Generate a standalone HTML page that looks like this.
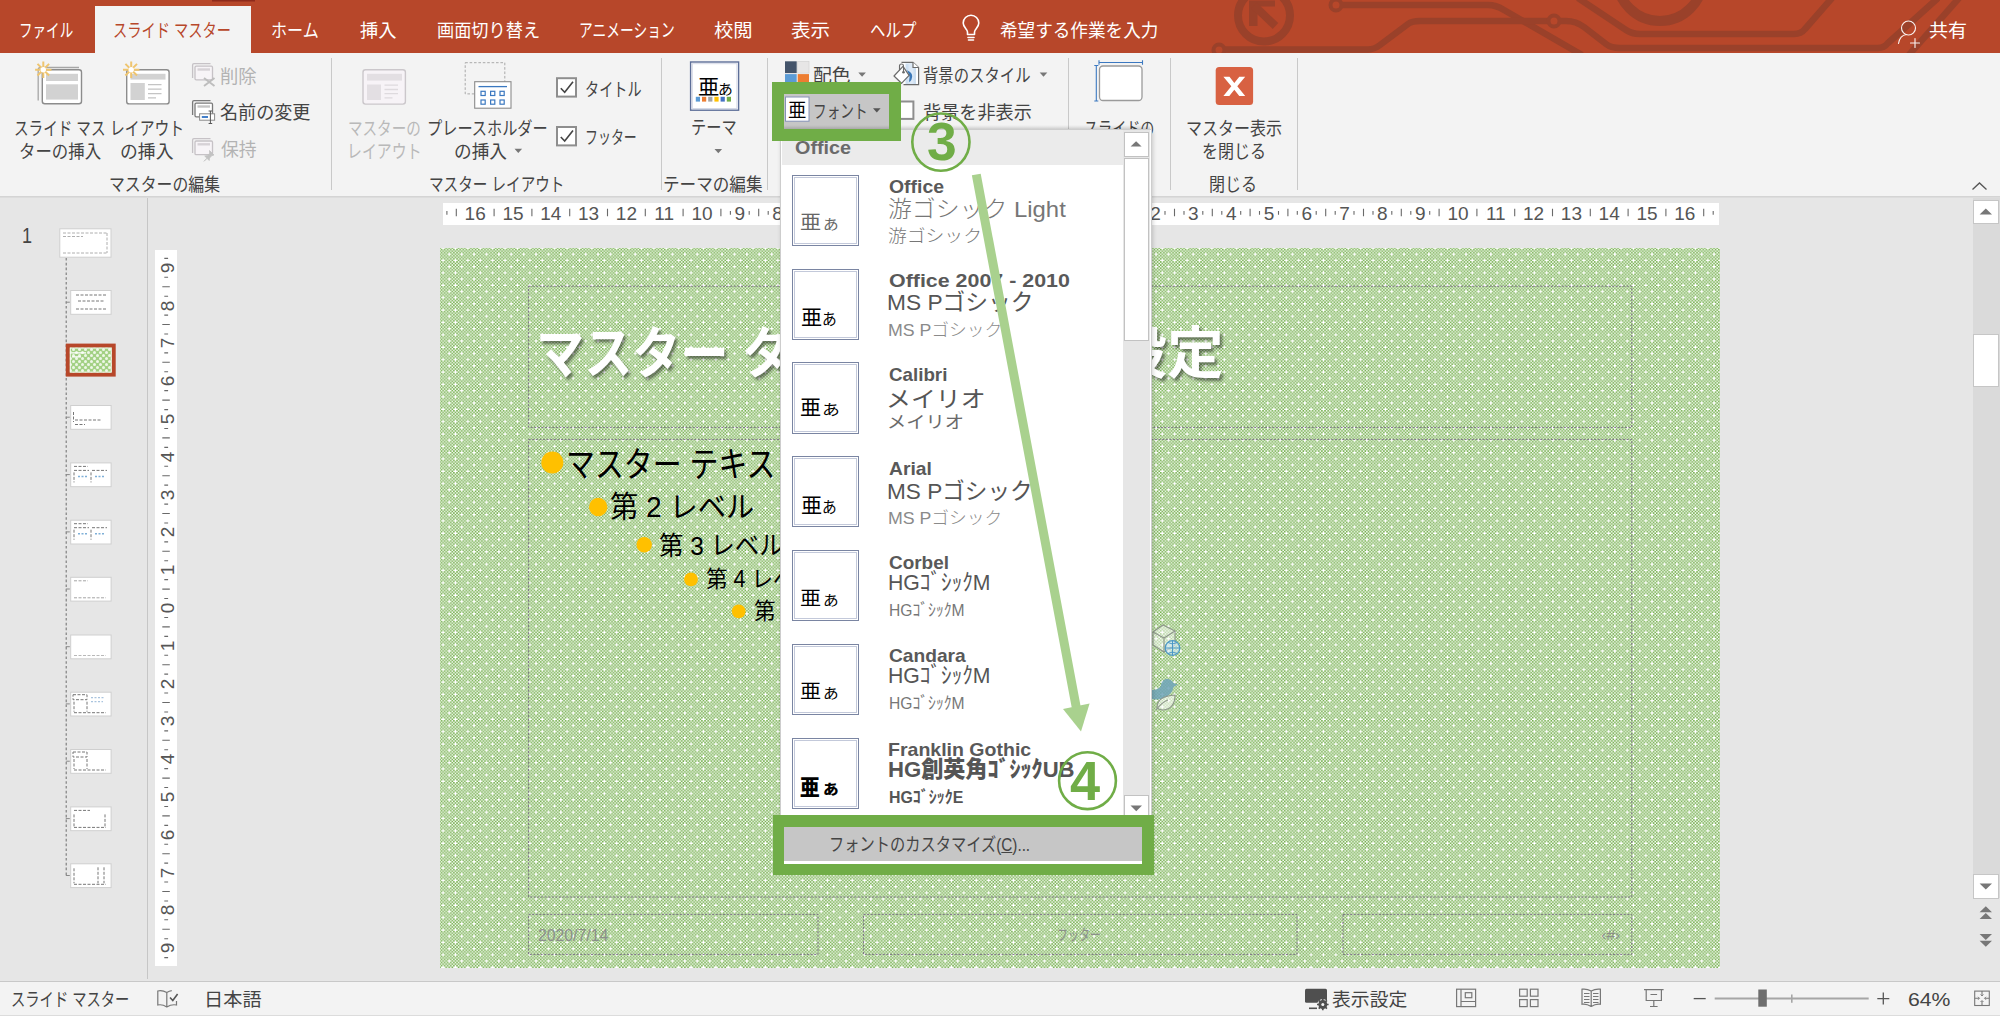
<!DOCTYPE html>
<html lang="ja">
<head>
<meta charset="utf-8">
<title>PowerPoint スライド マスター フォント</title>
<style>
html,body{margin:0;padding:0;}
body{width:2000px;height:1016px;overflow:hidden;background:#e6e6e6;font-family:"Liberation Sans","Noto Sans CJK JP",sans-serif;color:#444;}
#app{position:relative;width:2000px;height:1016px;overflow:hidden;background:#e6e6e6;}
.abs{position:absolute;}
.t{position:absolute;white-space:nowrap;line-height:1;transform-origin:0 0;margin:0;padding:0;}
.sep{position:absolute;width:1px;top:58px;height:132px;background:#c9c9c9;}
#titlebar{position:absolute;left:0;top:0;width:2000px;height:53px;background:#b7472a;overflow:hidden;}
#tab{position:absolute;left:95px;top:6px;width:156px;height:48px;background:#f3f3f3;}
#ribbon{position:absolute;left:0;top:53px;width:2000px;height:143px;background:#f3f3f3;border-bottom:1px solid #d4d4d4;}
#status{position:absolute;left:0;top:981px;width:2000px;height:35px;background:#f3f3f3;border-top:1px solid #c8c8c8;box-sizing:border-box;}
svg{position:absolute;overflow:visible;}
</style>
</head>
<body>
<div id="app">
<div id="titlebar">
<svg width="2000" height="53" viewBox="0 0 2000 53" style="left:0;top:0">
 <rect x="212" y="0" width="43" height="1.5" fill="#8e2a1b"/>
 <g fill="none" stroke="#9a412a" stroke-width="6.5" stroke-linejoin="round">
  <circle cx="1264" cy="15.5" r="26" stroke-width="8"/>
  <path d="M1249 0.5H1275V6.5H1257.5V26H1249z" fill="#9a412a" stroke="none"/>
  <path d="M1254 5.5L1275.5 26" stroke-width="8" stroke-linecap="butt"/>
  <circle cx="1336" cy="5" r="5.5" stroke-width="4"/>
  <path d="M1342 5H1488Q1496 5 1504 10L1582 55"/>
  <circle cx="1219" cy="50" r="5.5" stroke-width="4"/>
  <path d="M1225 49.5H1368Q1374 49.5 1380 45L1408 24Q1412 21 1420 21H1548"/>
  <circle cx="1554" cy="21" r="5.5" stroke-width="4"/>
  <path d="M1560 21H1566Q1576 21 1584 27L1606 44Q1611 48 1620 48H1878Q1884 48 1888 43L1938 -2"/>
  <path d="M1578 -2L1626 30Q1632 34 1640 34H1794Q1801 34 1805 29L1832 -2"/>
  <circle cx="1660" cy="-22" r="43" stroke-width="10"/>
  <path d="M1908 56L1959 -2"/>
 </g>
 <!-- lightbulb -->
 <g fill="none" stroke="#fff" stroke-width="1.6" stroke-linecap="round" stroke-linejoin="round">
  <path d="M967.5 34.5V32c0-2.5-4.3-4.5-4.3-9a7.8 7.8 0 0 1 15.6 0c0 4.500-4.300 6.500-4.300 9v2.500z"/>
  <path d="M968 37.500h6M968.500 40h5"/>
 </g>
 <!-- share -->
 <g fill="none" stroke="#fff" stroke-width="1.150" stroke-linecap="round" opacity=".92">
  <circle cx="1908.5" cy="28" r="7"/>
  <path d="M1898.500 43.500c1-6 4.500-8.500 8-9"/>
  <path d="M1915 38.500v9M1910.500 43h9"/>
 </g>
</svg>
<div id="tab"></div>
</div>
<span class="t" style="left:18.5px;top:21.8px;font-size:18.5px;font-weight:400;color:#fff;transform:scaleX(0.732);">ファイル</span>
<span class="t" style="left:271.1px;top:21.8px;font-size:18.5px;font-weight:400;color:#fff;transform:scaleX(0.868);">ホーム</span>
<span class="t" style="left:359.5px;top:21.8px;font-size:18.5px;font-weight:400;color:#fff;transform:scaleX(0.986);">挿入</span>
<span class="t" style="left:436.6px;top:21.8px;font-size:18.5px;font-weight:400;color:#fff;transform:scaleX(0.929);">画面切り替え</span>
<span class="t" style="left:578.5px;top:21.8px;font-size:18.5px;font-weight:400;color:#fff;transform:scaleX(0.744);">アニメーション</span>
<span class="t" style="left:713.5px;top:21.8px;font-size:18.5px;font-weight:400;color:#fff;transform:scaleX(1.043);">校閲</span>
<span class="t" style="left:791.4px;top:21.8px;font-size:18.5px;font-weight:400;color:#fff;transform:scaleX(1.057);">表示</span>
<span class="t" style="left:870.2px;top:21.8px;font-size:18.5px;font-weight:400;color:#fff;transform:scaleX(0.836);">ヘルプ</span>
<span class="t" style="left:1000.0px;top:21.8px;font-size:18.5px;font-weight:400;color:#fff;transform:scaleX(0.951);">希望する作業を入力</span>
<span class="t" style="left:1929.0px;top:21.8px;font-size:18.5px;font-weight:400;color:#fff;transform:scaleX(1.029);">共有</span>
<span class="t" style="left:112.5px;top:21.8px;font-size:18.5px;font-weight:400;color:#b7472a;transform:scaleX(0.770);">スライド マスター</span><div id="ribbon"></div>
<div class="sep" style="left:331px"></div>
<div class="sep" style="left:661px"></div>
<div class="sep" style="left:767px"></div>
<div class="sep" style="left:1068px"></div>
<div class="sep" style="left:1170px"></div>
<div class="sep" style="left:1297px"></div>
<!-- pressed font button bg -->
<div class="abs" style="left:778px;top:90px;width:112px;height:42px;background:#c6c6c6"></div>
<svg id="ricons" width="2000" height="200" viewBox="0 0 2000 200" style="left:0;top:0">
 <!-- slide master insert -->
 <g>
  <path d="M38.200 100.500V70q0-2.500 2.500-2.500H79" fill="none" stroke="#a6a6a6" stroke-width="1.300"/>
  <rect x="42.300" y="69.700" width="39.200" height="34" rx="2.500" fill="#fff" stroke="#8c8c8c" stroke-width="1.400"/>
  <rect x="46" y="73.800" width="32" height="7.200" fill="#d2d2d2"/>
  <rect x="46" y="84.300" width="32" height="15.300" fill="#d2d2d2"/>
  <g stroke="#efc56f" stroke-width="2" stroke-linecap="butt">
   <path d="M43.300 61.500v16.400M35.100 69.700h16.400M37.500 63.900l11.600 11.600M49.100 63.900l-11.600 11.600"/>
  </g>
  <circle cx="43.300" cy="69.700" r="2.700" fill="#fff"/>
 </g>
 <!-- layout insert -->
 <g>
  <rect x="126.700" y="69.700" width="42.400" height="34.200" rx="2.500" fill="#fff" stroke="#8c8c8c" stroke-width="1.400"/>
  <rect x="130.500" y="73.800" width="35" height="5.800" fill="#d2d2d2"/>
  <rect x="130.500" y="83" width="14.300" height="17" fill="#d2d2d2"/>
  <path d="M148 84.700h13.500M148 89.200h13.500M148 93.600h13.500M148 97.800h8" stroke="#c4c4c4" stroke-width="1.300" fill="none"/>
  <g stroke="#efc56f" stroke-width="2">
   <path d="M131.200 61.500v16.400M123 69.700h16.400M125.400 63.900l11.600 11.600M137 63.900l-11.600 11.600"/>
  </g>
  <circle cx="131.200" cy="69.700" r="2.700" fill="#fff"/>
 </g>
 <!-- delete (disabled) -->
 <g fill="none" stroke="#c6c2c6" stroke-width="1.300">
  <path d="M192.600 78V65q0-1.400 1.400-1.400H210.500"/>
  <rect x="195" y="66.200" width="17.500" height="13.600" rx="1.200" fill="#f7f4f7"/>
  <path d="M197.500 69.500H210" stroke-width="2.400" stroke="#d6d2d6"/>
  <path d="M204 78l10.500 8M214.500 78l-10.500 8" stroke="#bdbdbd" stroke-width="1.900"/>
 </g>
 <!-- rename -->
 <g fill="none" stroke="#7a7a7a" stroke-width="1.300">
  <path d="M192.600 115V102q0-1.400 1.400-1.400H210.500"/>
  <rect x="195" y="103.200" width="17.500" height="13.600" rx="1.200" fill="#fff"/>
  <path d="M197.500 106.500H210" stroke-width="2.400" stroke="#c4c4c4"/>
  <rect x="199.600" y="113.800" width="15" height="6.400" fill="#fff" stroke="#8a8a8a" stroke-width="1"/>
  <path d="M201.800 117H208" stroke="#2f72c4" stroke-width="1.800"/>
  <path d="M210.400 111v12.500M208.600 111h3.600M208.600 123.500h3.600" stroke="#555" stroke-width="1"/>
 </g>
 <!-- preserve (disabled) -->
 <g fill="none" stroke="#c6c2c6" stroke-width="1.300">
  <path d="M192.600 153V140q0-1.400 1.400-1.400H210.500"/>
  <rect x="195" y="141" width="17.500" height="13.600" rx="1.200" fill="#f7f4f7"/>
  <path d="M197.500 144.300H210" stroke-width="2.400" stroke="#d6d2d6"/>
  <path d="M209.500 150.500l4.500 4.500-2 .5-2.500 2.500-.3 2.500-2.200-2.200-3 3 3-3-2.300-2.300 2.500-.3 2.500-2.500z" fill="#c2c2c2" stroke="#c2c2c2" stroke-width=".8"/>
 </g>
 <!-- master layout (disabled) -->
 <g>
  <rect x="363" y="69.700" width="42.400" height="34.400" rx="2.500" fill="#f7f3f7" stroke="#cbc7cb" stroke-width="1.400"/>
  <rect x="367" y="73.800" width="35" height="6.800" fill="#e3dfe3"/>
  <rect x="367" y="84.500" width="14" height="15.500" fill="#e3dfe3"/>
  <path d="M384.500 85.200h13.500M384.500 89.500h13.500M384.500 93.700h13.500M384.500 97.800h8" stroke="#dedade" stroke-width="1.300" fill="none"/>
 </g>
 <!-- placeholder insert -->
 <g>
  <rect x="465.200" y="62.700" width="39.600" height="31.200" fill="none" stroke="#a9a9a9" stroke-width="1" stroke-dasharray="2.600 1.800"/>
  <rect x="474.700" y="81.700" width="36.300" height="26.500" fill="#fff" stroke="#8a8a8a" stroke-width="1.100"/>
  <path d="M478.500 86.600H507" stroke="#3b78c0" stroke-width="1.300"/>
  <g fill="none" stroke="#3b78c0" stroke-width="1.200">
   <rect x="481" y="91.300" width="4.200" height="4.200"/><rect x="490.600" y="91.300" width="4.200" height="4.200"/><rect x="500" y="91.300" width="4.200" height="4.200"/>
   <rect x="481" y="100" width="4.200" height="4.200"/><rect x="490.600" y="100" width="4.200" height="4.200"/><rect x="500" y="100" width="4.200" height="4.200"/>
  </g>
  <path d="M514.500 148.800h7.600l-3.800 4.200z" fill="#777"/>
 </g>
 <!-- checkboxes -->
 <g>
  <rect x="557" y="78.200" width="19" height="18.400" fill="#fff" stroke="#8e8e8e" stroke-width="2"/>
  <path d="M560.800 88.200l3.900 4 8.300-10.500" fill="none" stroke="#444" stroke-width="1.600"/>
  <rect x="557" y="127" width="19" height="18.400" fill="#fff" stroke="#8e8e8e" stroke-width="2"/>
  <path d="M560.800 137l3.900 4 8.300-10.500" fill="none" stroke="#444" stroke-width="1.600"/>
 </g>
 <!-- theme -->
 <g>
  <rect x="690.600" y="62" width="48" height="48.200" fill="#fff" stroke="#5d6e98" stroke-width="1.400"/>
  <rect x="692.300" y="63.700" width="44.600" height="44.800" fill="none" stroke="#d5d9e6" stroke-width="1"/>
  <rect x="695.800" y="96.800" width="4.200" height="4.800" fill="#5b9bd5"/>
  <rect x="702" y="96.800" width="4.200" height="4.800" fill="#ed7d31"/>
  <rect x="708.200" y="96.800" width="4.200" height="4.800" fill="#a5a5a5"/>
  <rect x="714.400" y="96.800" width="4.200" height="4.800" fill="#ffc000"/>
  <rect x="720.600" y="96.800" width="4.200" height="4.800" fill="#4472c4"/>
  <rect x="726.800" y="96.800" width="4.200" height="4.800" fill="#70ad47"/>
  <path d="M714.500 149h7.600l-3.800 4.200z" fill="#777"/>
 </g>
 <!-- colors -->
 <g>
  <rect x="785" y="61.300" width="11.700" height="11.800" fill="#44546a"/>
  <rect x="797.700" y="61.300" width="11.300" height="11.800" fill="#e7e6e6" stroke="#cfcfcf" stroke-width=".6"/>
  <rect x="785" y="74.100" width="11.700" height="11" fill="#5b9bd5"/>
  <rect x="797.700" y="74.100" width="11.300" height="11" fill="#ed7d31"/>
  <path d="M858.300 72.600h7.600l-3.800 4.200z" fill="#777"/>
 </g>
 <!-- background styles -->
 <g>
  <path d="M901.500 62.300h11.500l5.600 5.200V84.600H903.500z" fill="#fff"/>
  <path d="M905.500 63.500h7v4.500h3.500v16h-10.500z" fill="#cddff1"/>
  <path d="M908.500 63.500h4v4.500h1v16h-5z" fill="#dde9f6"/>
  <path d="M901.500 62.300h11.500l5.600 5.200V84.600H903.500" fill="none" stroke="#6b6b6b" stroke-width="1.200"/>
  <path d="M913 62.300v5.200h5.600" fill="#fff" stroke="#6b6b6b" stroke-width="1.200"/>
  <path d="M907 70.200q5.500 2 5.200 6.500-.3 3.500-2.700 5.500l-.4-1.500q1.300-3.500-.3-6.500z" fill="#3b78b8"/>
  <path d="M903 66.400l6.100 8.900-7.600 8-7.500-7.300z" fill="#fff" stroke="#6b6b6b" stroke-width="1.200" stroke-linejoin="round"/>
  <path d="M899.500 70.300v-4.300a2 2 0 0 1 4 0v6" fill="none" stroke="#6b6b6b" stroke-width="1.100"/>
  <circle cx="903.500" cy="72.300" r="1.300" fill="#6b6b6b"/>
  <path d="M1039.700 72.600h7.600l-3.800 4.200z" fill="#777"/>
 </g>
 <!-- font icon -->
 <g>
  <rect x="785.500" y="97" width="23.500" height="24.200" fill="#fff" stroke="#8592b6" stroke-width="1"/>
  <path d="M873 108.200h7.600l-3.800 4.200z" fill="#555"/>
 </g>
 <!-- hide background checkbox -->
 <rect x="895.800" y="101.500" width="17.600" height="17.400" fill="#fff" stroke="#8e8e8e" stroke-width="2"/>
 <!-- slide size -->
 <g>
  <rect x="1099.500" y="66" width="42.500" height="34.500" rx="3.500" fill="#fff" stroke="#9a9a9a" stroke-width="1.300"/>
  <path d="M1099 62.500h43.500M1099 60.300v4.400M1142.500 60.300v4.400M1096.300 65.500v35.500M1094.300 65.500h4M1094.300 101h4" stroke="#3b78c0" stroke-width="1.100" fill="none"/>
 </g>
 <!-- close master -->
 <g>
  <rect x="1215.700" y="67" width="37.400" height="38" rx="3.500" fill="#d86142"/>
  <path d="M1223.400 76.700h6.100l4.800 6.200 5-6.200h5.900l-7.900 9.600 7.900 9.600h-5.900l-5-6.100-5 6.100h-5.900l7.900-9.600z" fill="#fff"/>
 </g>
 <!-- collapse caret -->
 <path d="M1972.500 189.500l7-6.500 7 6.500" fill="none" stroke="#555" stroke-width="1.300"/>
</svg>
<span class="t" style="left:14.0px;top:119.7px;font-size:18.5px;font-weight:400;color:#444;transform:scaleX(0.788);">スライド マス</span>
<span class="t" style="left:18.6px;top:143.0px;font-size:18.5px;font-weight:400;color:#444;transform:scaleX(0.888);">ターの挿入</span>
<span class="t" style="left:109.8px;top:119.7px;font-size:18.5px;font-weight:400;color:#444;transform:scaleX(0.802);">レイアウト</span>
<span class="t" style="left:120.0px;top:143.0px;font-size:18.5px;font-weight:400;color:#444;transform:scaleX(0.963);">の挿入</span>
<span class="t" style="left:219.7px;top:68.3px;font-size:18.5px;font-weight:400;color:#b3b3b3;transform:scaleX(0.992);">削除</span>
<span class="t" style="left:219.7px;top:104.4px;font-size:18.5px;font-weight:400;color:#444;transform:scaleX(0.978);">名前の変更</span>
<span class="t" style="left:220.7px;top:140.5px;font-size:18.5px;font-weight:400;color:#b3b3b3;transform:scaleX(0.965);">保持</span>
<span class="t" style="left:108.8px;top:176.2px;font-size:18.5px;font-weight:400;color:#444;transform:scaleX(0.857);">マスターの編集</span>
<span class="t" style="left:348.4px;top:119.7px;font-size:18.5px;font-weight:400;color:#b9b9b9;transform:scaleX(0.787);">マスターの</span>
<span class="t" style="left:346.8px;top:142.8px;font-size:18.5px;font-weight:400;color:#b9b9b9;transform:scaleX(0.806);">レイアウト</span>
<span class="t" style="left:427.0px;top:119.7px;font-size:18.5px;font-weight:400;color:#444;transform:scaleX(0.821);">プレースホルダー</span>
<span class="t" style="left:453.5px;top:143.0px;font-size:18.5px;font-weight:400;color:#444;transform:scaleX(0.954);">の挿入</span>
<span class="t" style="left:584.5px;top:80.5px;font-size:18.5px;font-weight:400;color:#444;transform:scaleX(0.765);">タイトル</span>
<span class="t" style="left:584.6px;top:129.0px;font-size:18.5px;font-weight:400;color:#444;transform:scaleX(0.700);">フッター</span>
<span class="t" style="left:428.7px;top:176.3px;font-size:18.5px;font-weight:400;color:#444;transform:scaleX(0.789);">マスター レイアウト</span>
<span class="t" style="left:690.7px;top:119.0px;font-size:18.5px;font-weight:400;color:#444;transform:scaleX(0.821);">テーマ</span>
<span class="t" style="left:663.4px;top:176.3px;font-size:18.5px;font-weight:400;color:#444;transform:scaleX(0.896);">テーマの編集</span>
<span class="t" style="left:813.0px;top:66.5px;font-size:18.5px;font-weight:400;color:#444;transform:scaleX(1.020);">配色</span>
<span class="t" style="left:812.5px;top:102.7px;font-size:18.5px;font-weight:400;color:#444;transform:scaleX(0.739);">フォント</span>
<span class="t" style="left:923.3px;top:67.0px;font-size:18.5px;font-weight:400;color:#444;transform:scaleX(0.830);">背景のスタイル</span>
<span class="t" style="left:923.1px;top:103.5px;font-size:18.5px;font-weight:400;color:#444;transform:scaleX(0.980);">背景を非表示</span>
<span class="t" style="left:1084.1px;top:119.7px;font-size:18.5px;font-weight:400;color:#444;transform:scaleX(0.761);">スライドの</span>
<span class="t" style="left:1185.5px;top:119.7px;font-size:18.5px;font-weight:400;color:#444;transform:scaleX(0.866);">マスター表示</span>
<span class="t" style="left:1201.7px;top:143.0px;font-size:18.5px;font-weight:400;color:#444;transform:scaleX(0.866);">を閉じる</span>
<span class="t" style="left:1209.3px;top:176.3px;font-size:18.5px;font-weight:400;color:#444;transform:scaleX(0.865);">閉じる</span>
<span class="t" style="left:697.9px;top:76.0px;font-size:21px;font-weight:400;color:#000;transform:scaleX(1.016);">亜</span>
<span class="t" style="left:717.7px;top:81.5px;font-size:14px;font-weight:400;color:#000;transform:scaleX(1.058);">あ</span>
<span class="t" style="left:787.8px;top:100.8px;font-size:19px;font-weight:400;color:#000;transform:scaleX(0.967);">亜</span><div class="abs" style="left:0;top:197px;width:2000px;height:1px;background:#dcdcdc"></div>
<div class="abs" style="left:147px;top:198px;width:1px;height:781px;background:#c6c6c6"></div>
<svg width="150" height="800" viewBox="0 190 150 800" style="left:0;top:190px">
<defs><pattern id="tp" width="6" height="6" patternUnits="userSpaceOnUse"><rect width="6" height="6" fill="#a3d184"/><circle cx="1.500" cy="1.500" r="1.500" fill="#eef7e7"/><circle cx="4.500" cy="4.500" r="1.500" fill="#eef7e7"/></pattern></defs>
<path d="M66.200 258V875" stroke="#777" stroke-width="1.100" stroke-dasharray="2.600 2.200" fill="none"/>
<rect x="59.800" y="228.800" width="51.200" height="28.400" fill="#fff" stroke="#cfcfcf" stroke-width="1"/>
<path d="M63 233h44M63 236.500h20M107 233v20M63 253h44" stroke="#9a9a9a" stroke-width=".8" stroke-dasharray="3 1.500" fill="none"/>
<path d="M65.800 302.2h4" stroke="#8a8a8a" stroke-width="1" fill="none"/>
<rect x="70.700" y="290.5" width="40.400" height="23.800" fill="#fff" stroke="#cfcfcf" stroke-width="1"/>
<path d="M76 295.0h30M78 301.0h26M76 309.0h30" stroke="#777" stroke-width="1" stroke-dasharray="3 1.500" fill="none"/>
<path d="M65.800 360.0h4" stroke="#8a8a8a" stroke-width="1" fill="none"/>
<rect x="67.800" y="345.600" width="45.900" height="29" fill="url(#tp)" stroke="#b7472a" stroke-width="4"/>
<rect x="70.300" y="348.100" width="40.900" height="24" fill="none" stroke="#f4faef" stroke-width="1"/>
<path d="M72 352.8h14M72 356.8h9" stroke="#fff" stroke-width="1.200" fill="none"/>
<path d="M65.800 417.2h4" stroke="#8a8a8a" stroke-width="1" fill="none"/>
<rect x="70.700" y="405.5" width="40.400" height="23.800" fill="#fff" stroke="#cfcfcf" stroke-width="1"/>
<path d="M73.500 412.0v10M75 420.0h26M75 424.5h10" stroke="#777" stroke-width="1" stroke-dasharray="3 1.500" fill="none"/>
<path d="M65.800 474.6h4" stroke="#8a8a8a" stroke-width="1" fill="none"/>
<rect x="70.700" y="462.9" width="40.400" height="23.800" fill="#fff" stroke="#cfcfcf" stroke-width="1"/>
<path d="M74 466.4h14M74 470.4h15M92 470.4h15M74 472.4v10M91 472.4v10" stroke="#777" stroke-width="1" stroke-dasharray="3 1.500" fill="none"/>
<path d="M78 476.4h9M95 476.4h9" stroke="#7fb0d8" stroke-width="1.500" stroke-dasharray="2 1.500" fill="none"/>
<path d="M65.800 531.9h4" stroke="#8a8a8a" stroke-width="1" fill="none"/>
<rect x="70.700" y="520.2" width="40.400" height="23.800" fill="#fff" stroke="#cfcfcf" stroke-width="1"/>
<path d="M74 523.7h14M74 527.7h15M92 527.7h15M74 529.7v10M91 529.7v10" stroke="#777" stroke-width="1" stroke-dasharray="3 1.500" fill="none"/>
<path d="M78 533.7h9M95 533.7h9" stroke="#7fb0d8" stroke-width="1.500" stroke-dasharray="2 1.500" fill="none"/>
<path d="M65.800 589.0h4" stroke="#8a8a8a" stroke-width="1" fill="none"/>
<rect x="70.700" y="577.3" width="40.400" height="23.800" fill="#fff" stroke="#cfcfcf" stroke-width="1"/>
<path d="M74 580.8h14M74 597.8h32" stroke="#9a9a9a" stroke-width=".9" stroke-dasharray="3 1.500" fill="none"/>
<path d="M65.800 646.7h4" stroke="#8a8a8a" stroke-width="1" fill="none"/>
<rect x="70.700" y="635.0" width="40.400" height="23.800" fill="#fff" stroke="#cfcfcf" stroke-width="1"/>
<path d="M74 655.5h32" stroke="#b0b0b0" stroke-width=".9" stroke-dasharray="3 1.500" fill="none"/>
<path d="M65.800 703.9h4" stroke="#8a8a8a" stroke-width="1" fill="none"/>
<rect x="70.700" y="692.2" width="40.400" height="23.800" fill="#fff" stroke="#cfcfcf" stroke-width="1"/>
<path d="M73 694.7h14v5h-14zM74 701.7v10M87 701.7v10M74 712.7h32" stroke="#777" stroke-width="1" stroke-dasharray="3 1.500" fill="none"/>
<path d="M91 697.7h14M91 701.7h12" stroke="#a9c4de" stroke-width="1.200" stroke-dasharray="2 1.500" fill="none"/>
<path d="M65.800 761.2h4" stroke="#8a8a8a" stroke-width="1" fill="none"/>
<rect x="70.700" y="749.5" width="40.400" height="23.800" fill="#fff" stroke="#cfcfcf" stroke-width="1"/>
<path d="M73 752.0h14v5h-14zM74 759.0v10M87 759.0v10M74 770.0h32" stroke="#777" stroke-width="1" stroke-dasharray="3 1.500" fill="none"/>
<path d="M65.800 818.6h4" stroke="#8a8a8a" stroke-width="1" fill="none"/>
<rect x="70.700" y="806.9" width="40.400" height="23.800" fill="#fff" stroke="#cfcfcf" stroke-width="1"/>
<path d="M74 810.4h16M74 814.4v12M105 814.4v12M74 827.4h32" stroke="#777" stroke-width="1" stroke-dasharray="3 1.500" fill="none"/>
<path d="M65.800 875.5h4" stroke="#8a8a8a" stroke-width="1" fill="none"/>
<rect x="70.700" y="863.8" width="40.400" height="23.800" fill="#fff" stroke="#cfcfcf" stroke-width="1"/>
<path d="M74 868.3v15M98 867.3v16M104 867.3v16M74 884.3h32" stroke="#777" stroke-width="1" stroke-dasharray="3 1.500" fill="none"/>
</svg>
<div class="abs" style="left:442.800px;top:202.800px;width:1276px;height:22px;background:#fff"></div>
<div class="abs" style="left:155.400px;top:249.700px;width:21.400px;height:716px;background:#fff"></div>
<svg width="2000" height="1016" viewBox="0 0 2000 1016" style="left:0;top:0;pointer-events:none">
<path d="M446.9 211v3.800M456.3 208.800v7.500M465.8 211v3.800M484.7 211v3.800M494.1 208.800v7.500M503.6 211v3.800M522.5 211v3.800M531.9 208.800v7.500M541.4 211v3.800M560.2 211v3.800M569.7 208.800v7.500M579.2 211v3.800M598.0 211v3.800M607.5 208.800v7.500M617.0 211v3.800M635.9 211v3.800M645.3 208.800v7.500M654.8 211v3.800M673.7 211v3.800M683.1 208.800v7.500M692.5 211v3.800M711.5 211v3.800M720.9 208.800v7.500M730.4 211v3.800M749.2 211v3.800M758.7 208.800v7.500M768.2 211v3.800M787.0 211v3.800M796.5 208.800v7.500M806.0 211v3.800M824.9 211v3.800M834.3 208.800v7.500M843.8 211v3.800M862.6 211v3.800M872.1 208.800v7.500M881.5 211v3.800M900.5 211v3.800M909.9 208.800v7.500M919.4 211v3.800M938.2 211v3.800M947.7 208.800v7.500M957.1 211v3.800M976.0 211v3.800M985.5 208.800v7.500M995.0 211v3.800M1013.9 211v3.800M1023.3 208.800v7.500M1032.8 211v3.800M1051.7 211v3.800M1061.1 208.800v7.500M1070.5 211v3.800M1089.5 211v3.800M1098.9 208.800v7.500M1108.3 211v3.800M1127.2 211v3.800M1136.7 208.800v7.500M1146.2 211v3.800M1165.0 211v3.800M1174.5 208.800v7.500M1184.0 211v3.800M1202.8 211v3.800M1212.3 208.800v7.500M1221.8 211v3.800M1240.7 211v3.800M1250.1 208.800v7.500M1259.5 211v3.800M1278.5 211v3.800M1287.9 208.800v7.500M1297.3 211v3.800M1316.2 211v3.800M1325.7 208.800v7.500M1335.2 211v3.800M1354.0 211v3.800M1363.5 208.800v7.500M1373.0 211v3.800M1391.8 211v3.800M1401.3 208.800v7.500M1410.8 211v3.800M1429.7 211v3.800M1439.1 208.800v7.500M1448.5 211v3.800M1467.5 211v3.800M1476.9 208.800v7.500M1486.3 211v3.800M1505.2 211v3.800M1514.7 208.800v7.500M1524.2 211v3.800M1543.0 211v3.800M1552.5 208.800v7.500M1562.0 211v3.800M1580.8 211v3.800M1590.3 208.800v7.500M1599.8 211v3.800M1618.7 211v3.800M1628.1 208.800v7.500M1637.5 211v3.800M1656.4 211v3.800M1665.9 208.800v7.500M1675.3 211v3.800M1694.2 211v3.800M1703.7 208.800v7.500M1713.2 211v3.800M164.300 258.4h3.800M164.300 277.2h3.800M162.300 286.7h7.500M164.300 296.2h3.800M164.300 315.1h3.800M162.300 324.5h7.500M164.300 334.0h3.800M164.300 352.9h3.800M162.300 362.3h7.500M164.300 371.8h3.800M164.300 390.6h3.800M162.300 400.1h7.500M164.300 409.6h3.800M164.300 428.5h3.800M162.300 437.9h7.500M164.300 447.4h3.800M164.300 466.2h3.800M162.300 475.7h7.500M164.300 485.1h3.800M164.300 504.1h3.800M162.300 513.5h7.500M164.300 523.0h3.800M164.300 541.9h3.800M162.300 551.3h7.500M164.300 560.8h3.800M164.300 579.6h3.800M162.300 589.1h7.500M164.300 598.5h3.800M164.300 617.5h3.800M162.300 626.9h7.500M164.300 636.4h3.800M164.300 655.2h3.800M162.300 664.7h7.500M164.300 674.1h3.800M164.300 693.0h3.800M162.300 702.5h7.500M164.300 712.0h3.800M164.300 730.9h3.800M162.300 740.3h7.500M164.300 749.8h3.800M164.300 768.6h3.800M162.300 778.1h7.500M164.300 787.5h3.800M164.300 806.5h3.800M162.300 815.9h7.500M164.300 825.4h3.800M164.300 844.2h3.800M162.300 853.7h7.500M164.300 863.1h3.800M164.300 882.0h3.800M162.300 891.5h7.500M164.300 901.0h3.800M164.300 919.8h3.800M162.300 929.3h7.500M164.300 938.8h3.800M164.300 957.6h3.800" stroke="#6a6a6a" stroke-width="1.100" fill="none"/>
</svg>
<span class="t" style="left:475.2px;top:204.100px;font-size:19px;color:#555;background:#fff;transform:translateX(-50%);padding:0 1px;line-height:19px">16</span>
<span class="t" style="left:513.0px;top:204.100px;font-size:19px;color:#555;background:#fff;transform:translateX(-50%);padding:0 1px;line-height:19px">15</span>
<span class="t" style="left:550.8px;top:204.100px;font-size:19px;color:#555;background:#fff;transform:translateX(-50%);padding:0 1px;line-height:19px">14</span>
<span class="t" style="left:588.6px;top:204.100px;font-size:19px;color:#555;background:#fff;transform:translateX(-50%);padding:0 1px;line-height:19px">13</span>
<span class="t" style="left:626.4px;top:204.100px;font-size:19px;color:#555;background:#fff;transform:translateX(-50%);padding:0 1px;line-height:19px">12</span>
<span class="t" style="left:664.2px;top:204.100px;font-size:19px;color:#555;background:#fff;transform:translateX(-50%);padding:0 1px;line-height:19px">11</span>
<span class="t" style="left:702.0px;top:204.100px;font-size:19px;color:#555;background:#fff;transform:translateX(-50%);padding:0 1px;line-height:19px">10</span>
<span class="t" style="left:739.8px;top:204.100px;font-size:19px;color:#555;background:#fff;transform:translateX(-50%);padding:0 1px;line-height:19px">9</span>
<span class="t" style="left:777.6px;top:204.100px;font-size:19px;color:#555;background:#fff;transform:translateX(-50%);padding:0 1px;line-height:19px">8</span>
<span class="t" style="left:815.4px;top:204.100px;font-size:19px;color:#555;background:#fff;transform:translateX(-50%);padding:0 1px;line-height:19px">7</span>
<span class="t" style="left:853.2px;top:204.100px;font-size:19px;color:#555;background:#fff;transform:translateX(-50%);padding:0 1px;line-height:19px">6</span>
<span class="t" style="left:891.0px;top:204.100px;font-size:19px;color:#555;background:#fff;transform:translateX(-50%);padding:0 1px;line-height:19px">5</span>
<span class="t" style="left:928.8px;top:204.100px;font-size:19px;color:#555;background:#fff;transform:translateX(-50%);padding:0 1px;line-height:19px">4</span>
<span class="t" style="left:966.6px;top:204.100px;font-size:19px;color:#555;background:#fff;transform:translateX(-50%);padding:0 1px;line-height:19px">3</span>
<span class="t" style="left:1004.4px;top:204.100px;font-size:19px;color:#555;background:#fff;transform:translateX(-50%);padding:0 1px;line-height:19px">2</span>
<span class="t" style="left:1042.2px;top:204.100px;font-size:19px;color:#555;background:#fff;transform:translateX(-50%);padding:0 1px;line-height:19px">1</span>
<span class="t" style="left:1080.0px;top:204.100px;font-size:19px;color:#555;background:#fff;transform:translateX(-50%);padding:0 1px;line-height:19px">0</span>
<span class="t" style="left:1117.8px;top:204.100px;font-size:19px;color:#555;background:#fff;transform:translateX(-50%);padding:0 1px;line-height:19px">1</span>
<span class="t" style="left:1155.6px;top:204.100px;font-size:19px;color:#555;background:#fff;transform:translateX(-50%);padding:0 1px;line-height:19px">2</span>
<span class="t" style="left:1193.4px;top:204.100px;font-size:19px;color:#555;background:#fff;transform:translateX(-50%);padding:0 1px;line-height:19px">3</span>
<span class="t" style="left:1231.2px;top:204.100px;font-size:19px;color:#555;background:#fff;transform:translateX(-50%);padding:0 1px;line-height:19px">4</span>
<span class="t" style="left:1269.0px;top:204.100px;font-size:19px;color:#555;background:#fff;transform:translateX(-50%);padding:0 1px;line-height:19px">5</span>
<span class="t" style="left:1306.8px;top:204.100px;font-size:19px;color:#555;background:#fff;transform:translateX(-50%);padding:0 1px;line-height:19px">6</span>
<span class="t" style="left:1344.6px;top:204.100px;font-size:19px;color:#555;background:#fff;transform:translateX(-50%);padding:0 1px;line-height:19px">7</span>
<span class="t" style="left:1382.4px;top:204.100px;font-size:19px;color:#555;background:#fff;transform:translateX(-50%);padding:0 1px;line-height:19px">8</span>
<span class="t" style="left:1420.2px;top:204.100px;font-size:19px;color:#555;background:#fff;transform:translateX(-50%);padding:0 1px;line-height:19px">9</span>
<span class="t" style="left:1458.0px;top:204.100px;font-size:19px;color:#555;background:#fff;transform:translateX(-50%);padding:0 1px;line-height:19px">10</span>
<span class="t" style="left:1495.8px;top:204.100px;font-size:19px;color:#555;background:#fff;transform:translateX(-50%);padding:0 1px;line-height:19px">11</span>
<span class="t" style="left:1533.6px;top:204.100px;font-size:19px;color:#555;background:#fff;transform:translateX(-50%);padding:0 1px;line-height:19px">12</span>
<span class="t" style="left:1571.4px;top:204.100px;font-size:19px;color:#555;background:#fff;transform:translateX(-50%);padding:0 1px;line-height:19px">13</span>
<span class="t" style="left:1609.2px;top:204.100px;font-size:19px;color:#555;background:#fff;transform:translateX(-50%);padding:0 1px;line-height:19px">14</span>
<span class="t" style="left:1647.0px;top:204.100px;font-size:19px;color:#555;background:#fff;transform:translateX(-50%);padding:0 1px;line-height:19px">15</span>
<span class="t" style="left:1684.8px;top:204.100px;font-size:19px;color:#555;background:#fff;transform:translateX(-50%);padding:0 1px;line-height:19px">16</span>
<span class="t" style="left:166.600px;top:267.8px;font-size:19px;color:#555;background:#fff;transform:translate(-50%,-50%) rotate(-90deg);transform-origin:50% 50%;padding:0 1px;line-height:19px">9</span>
<span class="t" style="left:166.600px;top:305.6px;font-size:19px;color:#555;background:#fff;transform:translate(-50%,-50%) rotate(-90deg);transform-origin:50% 50%;padding:0 1px;line-height:19px">8</span>
<span class="t" style="left:166.600px;top:343.4px;font-size:19px;color:#555;background:#fff;transform:translate(-50%,-50%) rotate(-90deg);transform-origin:50% 50%;padding:0 1px;line-height:19px">7</span>
<span class="t" style="left:166.600px;top:381.2px;font-size:19px;color:#555;background:#fff;transform:translate(-50%,-50%) rotate(-90deg);transform-origin:50% 50%;padding:0 1px;line-height:19px">6</span>
<span class="t" style="left:166.600px;top:419.0px;font-size:19px;color:#555;background:#fff;transform:translate(-50%,-50%) rotate(-90deg);transform-origin:50% 50%;padding:0 1px;line-height:19px">5</span>
<span class="t" style="left:166.600px;top:456.8px;font-size:19px;color:#555;background:#fff;transform:translate(-50%,-50%) rotate(-90deg);transform-origin:50% 50%;padding:0 1px;line-height:19px">4</span>
<span class="t" style="left:166.600px;top:494.6px;font-size:19px;color:#555;background:#fff;transform:translate(-50%,-50%) rotate(-90deg);transform-origin:50% 50%;padding:0 1px;line-height:19px">3</span>
<span class="t" style="left:166.600px;top:532.4px;font-size:19px;color:#555;background:#fff;transform:translate(-50%,-50%) rotate(-90deg);transform-origin:50% 50%;padding:0 1px;line-height:19px">2</span>
<span class="t" style="left:166.600px;top:570.2px;font-size:19px;color:#555;background:#fff;transform:translate(-50%,-50%) rotate(-90deg);transform-origin:50% 50%;padding:0 1px;line-height:19px">1</span>
<span class="t" style="left:166.600px;top:608.0px;font-size:19px;color:#555;background:#fff;transform:translate(-50%,-50%) rotate(-90deg);transform-origin:50% 50%;padding:0 1px;line-height:19px">0</span>
<span class="t" style="left:166.600px;top:645.8px;font-size:19px;color:#555;background:#fff;transform:translate(-50%,-50%) rotate(-90deg);transform-origin:50% 50%;padding:0 1px;line-height:19px">1</span>
<span class="t" style="left:166.600px;top:683.6px;font-size:19px;color:#555;background:#fff;transform:translate(-50%,-50%) rotate(-90deg);transform-origin:50% 50%;padding:0 1px;line-height:19px">2</span>
<span class="t" style="left:166.600px;top:721.4px;font-size:19px;color:#555;background:#fff;transform:translate(-50%,-50%) rotate(-90deg);transform-origin:50% 50%;padding:0 1px;line-height:19px">3</span>
<span class="t" style="left:166.600px;top:759.2px;font-size:19px;color:#555;background:#fff;transform:translate(-50%,-50%) rotate(-90deg);transform-origin:50% 50%;padding:0 1px;line-height:19px">4</span>
<span class="t" style="left:166.600px;top:797.0px;font-size:19px;color:#555;background:#fff;transform:translate(-50%,-50%) rotate(-90deg);transform-origin:50% 50%;padding:0 1px;line-height:19px">5</span>
<span class="t" style="left:166.600px;top:834.8px;font-size:19px;color:#555;background:#fff;transform:translate(-50%,-50%) rotate(-90deg);transform-origin:50% 50%;padding:0 1px;line-height:19px">6</span>
<span class="t" style="left:166.600px;top:872.6px;font-size:19px;color:#555;background:#fff;transform:translate(-50%,-50%) rotate(-90deg);transform-origin:50% 50%;padding:0 1px;line-height:19px">7</span>
<span class="t" style="left:166.600px;top:910.4px;font-size:19px;color:#555;background:#fff;transform:translate(-50%,-50%) rotate(-90deg);transform-origin:50% 50%;padding:0 1px;line-height:19px">8</span>
<span class="t" style="left:166.600px;top:948.2px;font-size:19px;color:#555;background:#fff;transform:translate(-50%,-50%) rotate(-90deg);transform-origin:50% 50%;padding:0 1px;line-height:19px">9</span>
<svg width="1280" height="720" viewBox="0 0 1280 720" style="left:440px;top:248px;overflow:hidden">
<defs><pattern id="pt" x="0.750" y="0.750" width="12.400" height="12.400" patternUnits="userSpaceOnUse"><rect width="12.400" height="12.400" fill="#fff"/><path d="M0.00 0.00h1.55v1.55h-1.55zM3.10 0.00h1.55v1.55h-1.55zM6.20 0.00h1.55v1.55h-1.55zM9.30 0.00h1.55v1.55h-1.55zM1.55 1.55h1.55v1.55h-1.55zM4.65 1.55h1.55v1.55h-1.55zM7.75 1.55h1.55v1.55h-1.55zM10.85 1.55h1.55v1.55h-1.55zM0.00 3.10h1.55v1.55h-1.55zM3.10 3.10h1.55v1.55h-1.55zM6.20 3.10h1.55v1.55h-1.55zM9.30 3.10h1.55v1.55h-1.55zM1.55 4.65h1.55v1.55h-1.55zM4.65 4.65h1.55v1.55h-1.55zM10.85 4.65h1.55v1.55h-1.55zM0.00 6.20h1.55v1.55h-1.55zM3.10 6.20h1.55v1.55h-1.55zM6.20 6.20h1.55v1.55h-1.55zM9.30 6.20h1.55v1.55h-1.55zM1.55 7.75h1.55v1.55h-1.55zM4.65 7.75h1.55v1.55h-1.55zM7.75 7.75h1.55v1.55h-1.55zM10.85 7.75h1.55v1.55h-1.55zM0.00 9.30h1.55v1.55h-1.55zM3.10 9.30h1.55v1.55h-1.55zM6.20 9.30h1.55v1.55h-1.55zM9.30 9.30h1.55v1.55h-1.55zM4.65 10.85h1.55v1.55h-1.55zM7.75 10.85h1.55v1.55h-1.55zM10.85 10.85h1.55v1.55h-1.55z" fill="#70ad47"/></pattern></defs>
<rect width="1280" height="720" fill="url(#pt)"/>
<rect x="88.6" y="38.2" width="1103.2" height="141.2" fill="none" stroke="#7a6f86" stroke-width="1" stroke-dasharray="2 1.600"/>
<rect x="88.6" y="191.4" width="1103.2" height="457.6" fill="none" stroke="#7a6f86" stroke-width="1" stroke-dasharray="2 1.600"/>
<rect x="88.6" y="666.4" width="289.4" height="40.0" fill="none" stroke="#7a6f86" stroke-width="1" stroke-dasharray="2 1.600"/>
<rect x="423.6" y="666.4" width="433.4" height="40.0" fill="none" stroke="#7a6f86" stroke-width="1" stroke-dasharray="2 1.600"/>
<rect x="903.0" y="666.4" width="288.8" height="40.0" fill="none" stroke="#7a6f86" stroke-width="1" stroke-dasharray="2 1.600"/>
<circle cx="112.3" cy="214.5" r="11" fill="#ffc000"/>
<circle cx="158.2" cy="259.0" r="9.2" fill="#ffc000"/>
<circle cx="204.2" cy="296.7" r="7.7" fill="#ffc000"/>
<circle cx="251.0" cy="331.4" r="6.9" fill="#ffc000"/>
<circle cx="298.7" cy="363.3" r="6.9" fill="#ffc000"/>
<g transform="translate(-440,-248)"><path d="M1153 632l10-7 12 6v14l-11 7-11-7z" fill="rgba(255,255,255,.45)" stroke="#8d968a" stroke-width="1.100"/><path d="M1153 632l11 6 11-7M1164 638v14" fill="none" stroke="#8d968a" stroke-width="1.100"/><circle cx="1172.500" cy="648" r="7.300" fill="rgba(210,235,250,.6)" stroke="#4c98c6" stroke-width="1.300"/><path d="M1165.200 648h14.600M1172.500 640.700v14.600M1168 642.500q4.500 3 9 0M1168 653.500q4.500-3 9 0" stroke="#4c98c6" stroke-width="1" fill="none"/><path d="M1152 690q6 0 9-4a6.500 6.500 0 0 1 12.500-3l4.500 1.500-4.500 2.500q-1 6-6 9-6 5-15.500 3z" fill="#6fa3b8" fill-opacity=".85"/><path d="M1157 708q0-12 18-13 0 14-12 15-3 0-6-2z" fill="rgba(255,255,255,.55)" stroke="#8d968a" stroke-width="1.100"/><path d="M1156 710q6-8 12-10" stroke="#8d968a" stroke-width="1.100" fill="none"/></g>
</svg>
<div class="abs" style="left:1973px;top:198px;width:27px;height:700px;background:#dadada"></div>
<div class="abs" style="left:1973px;top:199.500px;width:25.500px;height:24px;background:#fff;border:1px solid #c6c6c6;box-sizing:border-box"></div>
<div class="abs" style="left:1973px;top:333.500px;width:25.500px;height:53px;background:#fff;border:1px solid #c6c6c6;box-sizing:border-box"></div>
<div class="abs" style="left:1973px;top:874px;width:25.500px;height:24.500px;background:#fff;border:1px solid #c6c6c6;box-sizing:border-box"></div>
<svg width="30" height="800" viewBox="1970 195 30 800" style="left:1970px;top:195px"><path d="M1979.600 214.500h12.400l-6.200-6z" fill="#777"/><path d="M1979.600 883.500h12.400l-6.200 6z" fill="#777"/><path d="M1979.600 912.200h12.400l-6.200-6zM1979.600 918.900h12.400l-6.200-6z" fill="#777"/><path d="M1979.600 934.100h12.400l-6.200 6zM1979.600 940.700h12.400l-6.200 6z" fill="#777"/></svg>
<span class="t" style="left:22.2px;top:225.1px;font-size:22px;font-weight:400;color:#444;transform:scaleX(0.818);">1</span>
<span class="t" style="left:536.2px;top:325.5px;font-size:56px;font-weight:700;color:#fff;transform:scaleX(0.860);text-shadow:2.5px 2.5px 3px rgba(0,0,0,.45);">マスター タイトルの</span>
<span class="t" style="left:998.0px;top:325.5px;font-size:56px;font-weight:700;color:#fff;transform:scaleX(1.007);text-shadow:2.5px 2.5px 3px rgba(0,0,0,.45);">書式設定</span>
<span class="t" style="left:566.0px;top:446.5px;font-size:35px;font-weight:400;color:#000;transform:scaleX(0.825);">マスター テキストの書式設定</span>
<span class="t" style="left:610.0px;top:492.2px;font-size:29.5px;font-weight:400;color:#000;transform:scaleX(0.957);">第 2 レベル</span>
<span class="t" style="left:658.5px;top:532.5px;font-size:26px;font-weight:400;color:#000;transform:scaleX(0.937);">第 3 レベル</span>
<span class="t" style="left:705.8px;top:568.4px;font-size:23px;font-weight:400;color:#000;transform:scaleX(0.936);">第 4 レベル</span>
<span class="t" style="left:753.7px;top:600.3px;font-size:23px;font-weight:400;color:#000;transform:scaleX(0.936);">第 5 レベル</span>
<span class="t" style="left:538.0px;top:927.8px;font-size:16px;font-weight:400;color:#8b8f8a;transform:scaleX(0.986);">2020/7/14</span>
<span class="t" style="left:1056.5px;top:927.3px;font-size:15px;font-weight:400;color:#8b8f8a;transform:scaleX(0.730);">フッター</span>
<span class="t" style="left:1600.7px;top:927.2px;font-size:15px;font-weight:400;color:#8b8f8a;transform:scaleX(1.059);">‹#›</span><div id="status"></div>
<div class="abs" style="left:0;top:1015px;width:2000px;height:1px;background:#dcdcdc"></div>
<svg width="2000" height="36" viewBox="0 980 2000 36" style="left:0;top:980px">
 <!-- spell/book icon -->
 <g fill="none" stroke="#777" stroke-width="1.200">
  <path d="M166.800 992.500v14.500M166.800 992.500q-4.500-2.500-9-1.500v14q4.500-1 9 2M166.800 992.500q2.500-1.500 5-1.800M176.500 1001v4q-5-1-9.700 2"/>
  <path d="M170 997.500l2.800 3 4.800-6.500" stroke="#555" stroke-width="1.600"/>
 </g>
 <!-- display settings -->
 <g>
  <rect x="1305" y="988.800" width="22" height="14" rx="1.500" fill="#4f4f4f"/>
  <path d="M1309 1008.300h8" stroke="#4f4f4f" stroke-width="1.600"/>
  <circle cx="1322.800" cy="1004.500" r="5.600" fill="#f3f3f3"/>
  <circle cx="1322.800" cy="1004.500" r="3.300" fill="none" stroke="#4f4f4f" stroke-width="2.400"/>
  <path d="M1322.800 998.700v11.600M1317 1004.500h11.600M1318.700 1000.400l8.200 8.200M1326.900 1000.400l-8.200 8.200" stroke="#4f4f4f" stroke-width="1.700"/>
  <circle cx="1322.800" cy="1004.500" r="1.500" fill="#f3f3f3"/>
 </g>
 <!-- view icons -->
 <g fill="none" stroke="#777" stroke-width="1.200">
  <rect x="1456.600" y="989.200" width="19" height="17.400"/>
  <path d="M1461 989.200v17.400M1461 1001.500h14.600"/>
  <rect x="1465.300" y="992.700" width="6.500" height="5"/>
  <rect x="1519.600" y="989.200" width="7.600" height="7"/><rect x="1530.400" y="989.200" width="7.600" height="7"/>
  <rect x="1519.600" y="999.600" width="7.600" height="7"/><rect x="1530.400" y="999.600" width="7.600" height="7"/>
  <path d="M1591.200 991v15.500M1591.200 991q-4.500-2.500-9.200-1.800v15q4.700-.7 9.200 2.300M1591.200 991q4.500-2.500 9.200-1.800v15q-4.700-.7-9.200 2.300"/>
  <path d="M1584 993.500h5.500M1584 996.500h5.500M1584 999.500h5.500M1584 1002.500h5.500M1593 993.500h5.500M1593 996.500h5.500M1593 999.500h5.500M1593 1002.500h5.500" stroke-width="1"/>
  <path d="M1644 989.700h19.600M1646.200 989.700v10.800h15.200v-10.800M1653.800 1000.500v6M1650 1006.500h7.600M1650.500 994.500h6.600"/>
 </g>
 <!-- zoom -->
 <path d="M1693.700 998.600h12" stroke="#555" stroke-width="1.300"/>
 <path d="M1714.700 998.600h154" stroke="#a6a6a6" stroke-width="2"/>
 <path d="M1791.800 994.600v8.200" stroke="#a6a6a6" stroke-width="1.600"/>
 <rect x="1758.300" y="989.500" width="8.500" height="17.200" fill="#6e6e6e"/>
 <path d="M1877.300 998.600h12M1883.300 992.600v12" stroke="#555" stroke-width="1.300" fill="none"/>
 <g fill="none" stroke="#777" stroke-width="1.100">
  <rect x="1974.700" y="991.100" width="14.600" height="14.400"/>
  <path d="M1982 991.100v4.500M1982 1005.500v-4.500M1974.700 998.300h4.500M1989.300 998.300h-4.500"/>
  <path d="M1980.500 994.500l1.500 1.500 1.500-1.500M1980.500 1002l1.500-1.500 1.500 1.500M1978 996.800l1.500 1.500-1.500 1.500M1986 996.800l-1.500 1.500 1.500 1.500" stroke-width=".9"/>
 </g>
</svg>
<span class="t" style="left:10.5px;top:991.0px;font-size:18.5px;font-weight:400;color:#444;transform:scaleX(0.773);">スライド マスター</span>
<span class="t" style="left:203.9px;top:991.0px;font-size:18.5px;font-weight:400;color:#444;transform:scaleX(1.038);">日本語</span>
<span class="t" style="left:1332.0px;top:991.0px;font-size:18.5px;font-weight:400;color:#444;transform:scaleX(1.019);">表示設定</span>
<span class="t" style="left:1907.5px;top:989.7px;font-size:19px;font-weight:400;color:#444;transform:scaleX(1.116);">64%</span><div class="abs" style="left:779.800px;top:128.500px;width:372px;height:738px;background:#fff;border:1px solid #cdcdcd;box-sizing:border-box;box-shadow:1px 2px 4px rgba(0,0,0,.18)"></div>
<div class="abs" style="left:782px;top:124.500px;width:368px;height:4px;background:linear-gradient(rgba(0,0,0,0),rgba(0,0,0,.13))"></div>
<div class="abs" style="left:782px;top:129.500px;width:341px;height:35px;background:#ebebeb"></div>
<div class="abs" style="left:1123px;top:129.500px;width:26.500px;height:686px;background:#e6e6e6"></div>
<div class="abs" style="left:1123.500px;top:132px;width:25px;height:24.500px;background:#fff;border:1px solid #c2c2c2;box-sizing:border-box"></div>
<div class="abs" style="left:1123.500px;top:157.500px;width:25px;height:183px;background:#fff;border:1px solid #c2c2c2;box-sizing:border-box"></div>
<div class="abs" style="left:1123.500px;top:795px;width:25px;height:21px;background:#fff;border:1px solid #c2c2c2;box-sizing:border-box"></div>
<svg width="30" height="700" viewBox="1122 128 30 700" style="left:1122px;top:128px"><path d="M1130.600 146.500h11l-5.500-5.300z" fill="#777"/><path d="M1130.500 805.500h11.500l-5.750 5.800z" fill="#777"/></svg>
<div class="abs" style="left:792px;top:174.7px;width:67.400px;height:71.400px;box-sizing:border-box;border:1px solid #7a85a2;background:#fff"><div style="position:absolute;left:1px;top:1px;right:1px;bottom:1px;border:1px solid #c3c9da"></div></div>
<div class="abs" style="left:792px;top:268.5px;width:67.400px;height:71.400px;box-sizing:border-box;border:1px solid #7a85a2;background:#fff"><div style="position:absolute;left:1px;top:1px;right:1px;bottom:1px;border:1px solid #c3c9da"></div></div>
<div class="abs" style="left:792px;top:362.3px;width:67.400px;height:71.400px;box-sizing:border-box;border:1px solid #7a85a2;background:#fff"><div style="position:absolute;left:1px;top:1px;right:1px;bottom:1px;border:1px solid #c3c9da"></div></div>
<div class="abs" style="left:792px;top:456.1px;width:67.400px;height:71.400px;box-sizing:border-box;border:1px solid #7a85a2;background:#fff"><div style="position:absolute;left:1px;top:1px;right:1px;bottom:1px;border:1px solid #c3c9da"></div></div>
<div class="abs" style="left:792px;top:549.9px;width:67.400px;height:71.400px;box-sizing:border-box;border:1px solid #7a85a2;background:#fff"><div style="position:absolute;left:1px;top:1px;right:1px;bottom:1px;border:1px solid #c3c9da"></div></div>
<div class="abs" style="left:792px;top:643.7px;width:67.400px;height:71.400px;box-sizing:border-box;border:1px solid #7a85a2;background:#fff"><div style="position:absolute;left:1px;top:1px;right:1px;bottom:1px;border:1px solid #c3c9da"></div></div>
<div class="abs" style="left:792px;top:737.5px;width:67.400px;height:71.400px;box-sizing:border-box;border:1px solid #7a85a2;background:#fff"><div style="position:absolute;left:1px;top:1px;right:1px;bottom:1px;border:1px solid #c3c9da"></div></div>
<div class="abs" style="left:782px;top:823px;width:368px;height:37.700px;background:#c6c6c6"></div>
<span class="t" style="left:795.3px;top:139.5px;font-size:17.8px;font-weight:700;color:#6a6a6a;transform:scaleX(1.112);">Office</span>
<span class="t" style="left:889.4px;top:179.3px;font-size:17.8px;font-weight:700;color:#595959;transform:scaleX(1.092);">Office</span>
<span class="t" style="left:888.3px;top:199.2px;font-size:22.5px;font-weight:300;color:#767676;transform:scaleX(1.061);">游ゴシック Light</span>
<span class="t" style="left:888.3px;top:227.8px;font-size:17px;font-weight:300;color:#767676;transform:scaleX(1.105);">游ゴシック</span>
<span class="t" style="left:799.9px;top:213.3px;font-size:20px;font-weight:400;color:#666;transform:scale(1.056,0.967);">亜</span>
<span class="t" style="left:822.9px;top:218.3px;font-size:14.5px;font-weight:400;color:#666;transform:scale(1.083,0.954);">あ</span>
<span class="t" style="left:889.4px;top:273.1px;font-size:17.8px;font-weight:700;color:#595959;transform:scaleX(1.204);">Office 2007 - 2010</span>
<span class="t" style="left:887.4px;top:291.6px;font-size:22.5px;font-weight:400;color:#555;transform:scaleX(1.011);">MS Pゴシック</span>
<span class="t" style="left:888.4px;top:322.1px;font-size:17px;font-weight:300;color:#8a8a8a;transform:scaleX(1.043);">MS Pゴシック</span>
<span class="t" style="left:800.9px;top:308.1px;font-size:20px;font-weight:400;color:#000;transform:scale(1.056,1.017);">亜</span>
<span class="t" style="left:821.8px;top:312.2px;font-size:14.5px;font-weight:400;color:#000;transform:scale(1.017,1.092);">あ</span>
<span class="t" style="left:889.4px;top:366.9px;font-size:17.8px;font-weight:700;color:#595959;transform:scaleX(1.055);">Calibri</span>
<span class="t" style="left:886.1px;top:388.8px;font-size:22.5px;font-weight:400;color:#555;transform:scaleX(1.108);">メイリオ</span>
<span class="t" style="left:887.1px;top:413.9px;font-size:17px;font-weight:400;color:#6a6a6a;transform:scaleX(1.132);">メイリオ</span>
<span class="t" style="left:799.9px;top:397.8px;font-size:20px;font-weight:400;color:#000;transform:scale(1.056,1.022);">亜</span>
<span class="t" style="left:822.4px;top:403.2px;font-size:14.5px;font-weight:400;color:#000;transform:scaleX(1.233);">あ</span>
<span class="t" style="left:889.4px;top:460.7px;font-size:17.8px;font-weight:700;color:#595959;transform:scaleX(1.082);">Arial</span>
<span class="t" style="left:887.4px;top:480.7px;font-size:22.5px;font-weight:400;color:#555;transform:scaleX(1.004);">MS Pゴシック</span>
<span class="t" style="left:888.4px;top:509.7px;font-size:17px;font-weight:300;color:#8a8a8a;transform:scaleX(1.043);">MS Pゴシック</span>
<span class="t" style="left:800.9px;top:495.7px;font-size:20px;font-weight:400;color:#000;transform:scale(1.056,1.017);">亜</span>
<span class="t" style="left:821.8px;top:499.8px;font-size:14.5px;font-weight:400;color:#000;transform:scale(1.017,1.092);">あ</span>
<span class="t" style="left:889.4px;top:554.5px;font-size:17.8px;font-weight:700;color:#595959;transform:scaleX(1.065);">Corbel</span>
<span class="t" style="left:887.5px;top:571.5px;font-size:22.5px;font-weight:400;color:#555;transform:scaleX(0.943);">HGｺﾞｼｯｸM</span>
<span class="t" style="left:888.5px;top:601.8px;font-size:17px;font-weight:400;color:#777;transform:scaleX(0.920);">HGｺﾞｼｯｸM</span>
<span class="t" style="left:799.9px;top:588.5px;font-size:20px;font-weight:400;color:#000;transform:scale(1.056,0.967);">亜</span>
<span class="t" style="left:822.9px;top:593.5px;font-size:14.5px;font-weight:400;color:#000;transform:scale(1.083,0.954);">あ</span>
<span class="t" style="left:889.4px;top:648.3px;font-size:17.8px;font-weight:700;color:#595959;transform:scaleX(1.078);">Candara</span>
<span class="t" style="left:887.5px;top:665.1px;font-size:22.5px;font-weight:400;color:#555;transform:scaleX(0.943);">HGｺﾞｼｯｸM</span>
<span class="t" style="left:888.5px;top:695.3px;font-size:17px;font-weight:400;color:#777;transform:scaleX(0.920);">HGｺﾞｼｯｸM</span>
<span class="t" style="left:799.9px;top:682.3px;font-size:20px;font-weight:400;color:#000;transform:scale(1.056,0.967);">亜</span>
<span class="t" style="left:822.9px;top:687.3px;font-size:14.5px;font-weight:400;color:#000;transform:scale(1.083,0.954);">あ</span>
<span class="t" style="left:888.3px;top:742.1px;font-size:17.8px;font-weight:700;color:#595959;transform:scaleX(1.098);">Franklin Gothic</span>
<span class="t" style="left:888.4px;top:758.9px;font-size:22.5px;font-weight:900;color:#555;transform:scaleX(0.982);">HG創英角ｺﾞｼｯｸUB</span>
<span class="t" style="left:888.5px;top:789.1px;font-size:17px;font-weight:700;color:#555;transform:scaleX(0.936);">HGｺﾞｼｯｸE</span>
<span class="t" style="left:800.0px;top:776.0px;font-size:20px;font-weight:900;color:#000;transform:scale(0.980,1.089);">亜</span>
<span class="t" style="left:822.9px;top:782.0px;font-size:14.5px;font-weight:900;color:#000;transform:scale(1.077,0.973);">あ</span>
<span class="t" style="left:829.4px;top:836.0px;font-size:18.5px;font-weight:400;color:#444;transform:scaleX(0.824);">フォントのカスタマイズ(<u>C</u>)...</span><!-- annotations -->
<div class="abs" style="left:772.200px;top:81.700px;width:129px;height:59.400px;box-sizing:border-box;border:12px solid #70ad47"></div>
<div class="abs" style="left:772.800px;top:814.600px;width:380.800px;height:60.500px;box-sizing:border-box;border-style:solid;border-color:#70ad47;border-width:12px 12.100px 11.500px 11.600px"></div>
<svg width="2000" height="1016" viewBox="0 0 2000 1016" style="left:0;top:0;pointer-events:none">
 <path d="M976.300 174.500L1076.200 707" stroke="#a9d18e" stroke-width="9" fill="none"/>
 <path d="M1063 709l26.600-5.400-8.600 28z" fill="#a9d18e"/>
 <circle cx="940.900" cy="142.100" r="28.600" fill="none" stroke="#70ad47" stroke-width="2.600"/>
 <circle cx="1087.500" cy="780.700" r="28.400" fill="none" stroke="#70ad47" stroke-width="2.600"/>
</svg>
<span class="t" style="left:926.6px;top:114.8px;font-size:52px;font-weight:700;color:#70ad47;transform:scale(1.027,1.026);">3</span>
<span class="t" style="left:1070.0px;top:753.6px;font-size:52px;font-weight:700;color:#70ad47;transform:scale(1.041,1.050);">4</span>
</div>
</body>
</html>
